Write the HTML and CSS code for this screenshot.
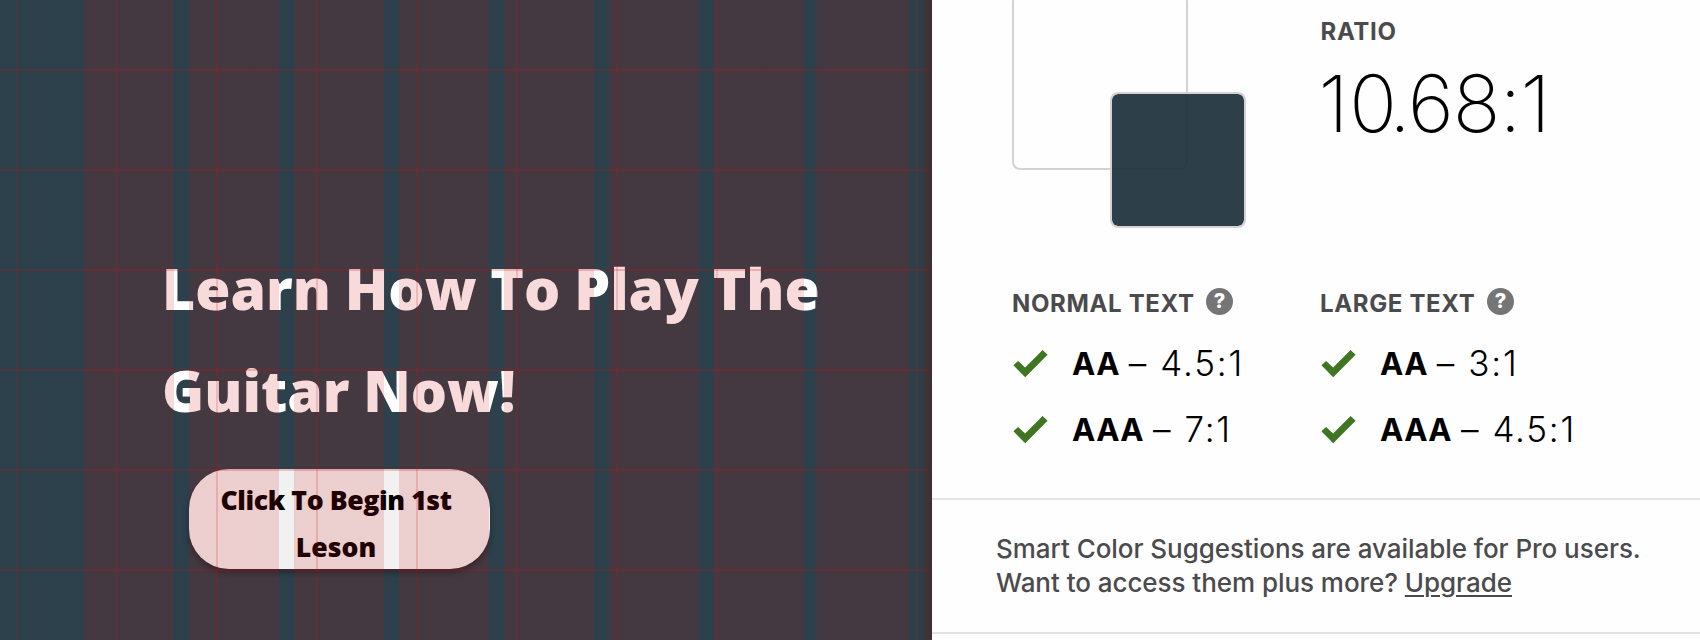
FILE: index.html
```html
<!DOCTYPE html>
<html lang="en">
<head>
<meta charset="utf-8">
<title>Contrast check</title>
<link rel="stylesheet" href="styles.css">
</head>
<body>
<svg class="defs" width="0" height="0" aria-hidden="true">
  <symbol id="check" viewBox="0 0 35 28"><path d="M.4 15.3 5.1 11l7 6.5L29.6.1l5 4.6L12.2 27.3z"/></symbol>
</svg>
<div class="app">
  <main class="hero">
    <h1 class="hero-title">Learn How To Play The<br>Guitar Now!</h1>
    <button class="hero-button"><span class="line-tight">Click To Begin 1st</span><span>Leson</span></button>
    <div class="overlay columns"></div>
    <div class="overlay lines"></div>
    <div class="overlay edge"></div>
  </main>
  <aside class="panel">
    <section class="contrast">
      <div class="swatches">
        <div class="swatch foreground"></div>
        <div class="swatch background"></div>
      </div>
      <div class="ratio">
        <h2 class="label">RATIO</h2>
        <div class="ratio-value"><span class="lead">1</span><span class="kern">0</span>.68:1</div>
      </div>
      <div class="level">
        <h2 class="label">NORMAL TEXT <span class="help">?</span></h2>
        <div class="result"><svg class="check"><use href="#check"/></svg><b>AA</b><i>–</i><span>4.5:1</span></div>
        <div class="result"><svg class="check"><use href="#check"/></svg><b>AAA</b><i>–</i><span>7:1</span></div>
      </div>
      <div class="level">
        <h2 class="label">LARGE TEXT <span class="help">?</span></h2>
        <div class="result"><svg class="check"><use href="#check"/></svg><b>AA</b><i>–</i><span>3:1</span></div>
        <div class="result"><svg class="check"><use href="#check"/></svg><b>AAA</b><i>–</i><span>4.5:1</span></div>
      </div>
    </section>
    <section class="promo">
      <p>Smart Color Suggestions are available for Pro users.<br>Want to access them plus more? <a class="upgrade">Upgrade</a></p>
    </section>
  </aside>
</div>
</body>
</html>
```
FILE: styles.css
```css
* { box-sizing: border-box; }
body { margin: 0; background: #fff; }
.defs { position: absolute; }
.app { display: grid; grid-template-columns: 932px 768px; height: 640px; overflow: hidden; }

.hero {
  position: relative;
  height: 640px;
  padding: 237px 0 0 162px;
  background: #2c414b;
  font-family: "Open Sans", sans-serif;
  overflow: hidden;
}
.hero-title {
  margin: 0;
  font-size: 57px;
  font-weight: 800;
  line-height: 102px;
  word-spacing: -1px;
  color: #fff;
  white-space: nowrap;
}
.hero-button {
  display: flex;
  flex-direction: column;
  align-items: center;
  width: 301px;
  height: 100px;
  margin: 28px 0 0 27px;
  padding: 8px 7px 0 0;
  border: 0;
  border-radius: 40px;
  background: #f1f1f1;
  box-shadow: 0 4px 6px rgba(0, 0, 0, .35);
  font: 800 26.6px/47px "Open Sans", sans-serif;
  color: #000;
  white-space: nowrap;
}
.line-tight { letter-spacing: -.4px; }
.overlay { position: absolute; inset: 0; pointer-events: none; }
.columns {
  left: 84px;
  background: repeating-linear-gradient(90deg, rgba(207, 8, 8, .148) 0 90px, transparent 90px 105px);
}
.lines {
  background:
    repeating-linear-gradient(90deg, rgba(207, 8, 8, .17) 0 2px, transparent 2px 100px) 16px 0 / 1000px 100%,
    repeating-linear-gradient(180deg, rgba(207, 8, 8, .22) 0 2px, transparent 2px 100px) 0 69px / 100% 1000px;
}
.edge { left: 918px; background: linear-gradient(90deg, transparent, rgba(40, 20, 0, .25)); }

.panel { background: #fefefe; font-family: Inter, sans-serif; color: #4b4b4d; }
.contrast {
  display: grid;
  grid-template-columns: 308px 1fr;
  grid-template-rows: 289px 1fr;
  height: 500px;
  padding-left: 80px;
  border-bottom: 2px solid #e3e3e3;
}
.swatches { position: relative; }
.swatch { position: absolute; border: 2px solid #d3d3d3; border-radius: 8px; }
.foreground { left: 0; top: -6px; width: 176px; height: 176px; }
.background { left: 98px; top: 92px; width: 136px; height: 136px; background: rgba(29, 50, 60, .93); background-clip: padding-box; }
.label {
  display: flex;
  align-items: center;
  margin: 0;
  font-size: 24px;
  font-weight: 650;
  line-height: 30px;
  letter-spacing: .65px;
}
.ratio { padding: 17px 0 0 .5px; }
.ratio-value {
  margin: 11px 0 0 -2px;
  font-size: 79px;
  font-weight: 220;
  line-height: 90px;
  letter-spacing: -1px;
  color: #000;
}
.lead { letter-spacing: .7px; }
.kern { letter-spacing: -8px; }
.help {
  width: 27px;
  height: 27px;
  margin: -5px 0 0 11.5px;
  border-radius: 50%;
  background: #757575;
  color: #fff;
  font-size: 20px;
  font-weight: 800;
  line-height: 27px;
  letter-spacing: 0;
  text-align: center;
}
.result { display: flex; align-items: baseline; height: 40px; margin-top: 26px; font-size: 35px; line-height: 40px; font-weight: 350; color: #000; }
.label + .result { margin-top: 24px; }
.check { width: 35px; height: 28px; margin: 7px 24px 0 1px; align-self: flex-start; fill: #407622; }
.result b { align-self: flex-start; line-height: 42px; font-size: 31.2px; font-weight: 650; letter-spacing: .4px; }
.result i { font-style: normal; margin: 0 14px 0 9px; }
.result span { letter-spacing: 1.8px; }
.promo { height: 134px; padding: 32px 0 0 64px; border-bottom: 2px solid #e3e3e3; }
.promo p { margin: 0; font-size: 26px; font-weight: 540; line-height: 34px; letter-spacing: -.05px; white-space: nowrap; }
.upgrade { text-decoration: underline; text-decoration-thickness: 2px; text-underline-offset: 3px; }
```
